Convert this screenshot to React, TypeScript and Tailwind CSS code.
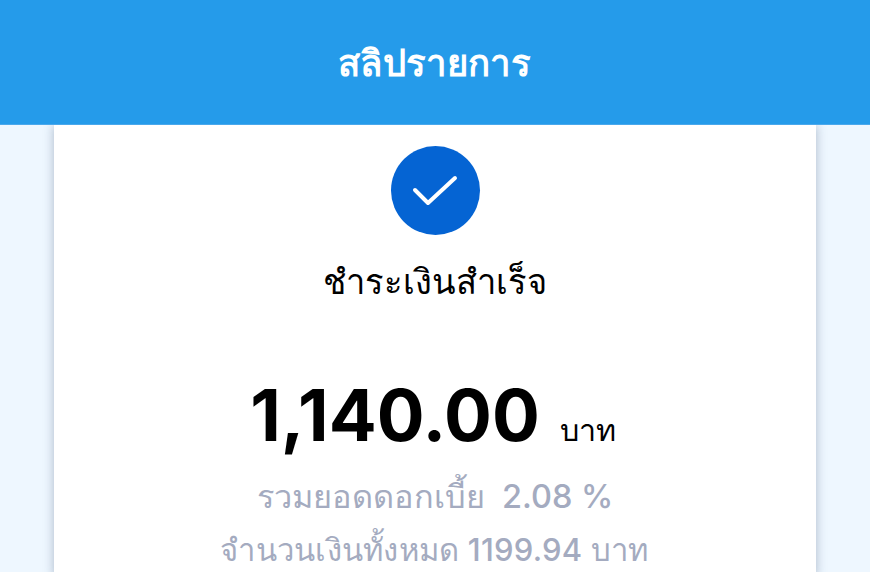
export default function App() {
  return (
    <div className="w-[870px] h-[572px] overflow-hidden bg-[#eef7ff] flex flex-col font-['Inter','Noto_Sans','Noto_Sans_CJK_SC',sans-serif]">
      <header className="h-[125px] shrink-0 bg-[#259bea] border-b border-[#4aa8ec] flex items-center justify-center relative z-10">
        <h1 className="text-white text-[36.5px] tracking-[0.3px] font-bold leading-none pt-[2px] pr-[1px]">สลิปรายการ</h1>
      </header>
      <main className="ml-[54px] w-[762px] flex-1 bg-white shadow-[0_0_10px_rgba(70,90,120,0.4)] flex flex-col items-center pt-[21px]">
        <div className="w-[89px] h-[89px] rounded-full bg-[#0564d3] flex items-center justify-center">
          <svg width="48" height="36" viewBox="0 0 48 36" fill="none" stroke="white" strokeWidth="4" strokeLinecap="round" strokeLinejoin="round">
            <path d="M4 17 L17 30 L44 5" />
          </svg>
        </div>
        <p className="mt-[20px] text-[34.5px] leading-[54px] font-medium text-black">ชำระเงินสำเร็จ</p>
        <div className="mt-[56px] pr-[4px] flex items-baseline gap-[20px] text-black">
          <span className="text-[71px] font-bold leading-[100px]">1,140.00</span>
          <span className="text-[30.5px] font-medium">บาท</span>
        </div>
        <p className="mt-[5px] text-[32.5px] leading-[54px] font-medium text-[#a4abc0]">รวมยอดดอกเบี้ย&nbsp; 2.08 %</p>
        <p className="-mt-[1px] pr-[1px] text-[31px] tracking-[0.25px] leading-[54px] font-medium text-[#a4abc0] whitespace-nowrap">จำนวนเงินทั้งหมด 1199.94 บาท</p>
      </main>
    </div>
  );
}
